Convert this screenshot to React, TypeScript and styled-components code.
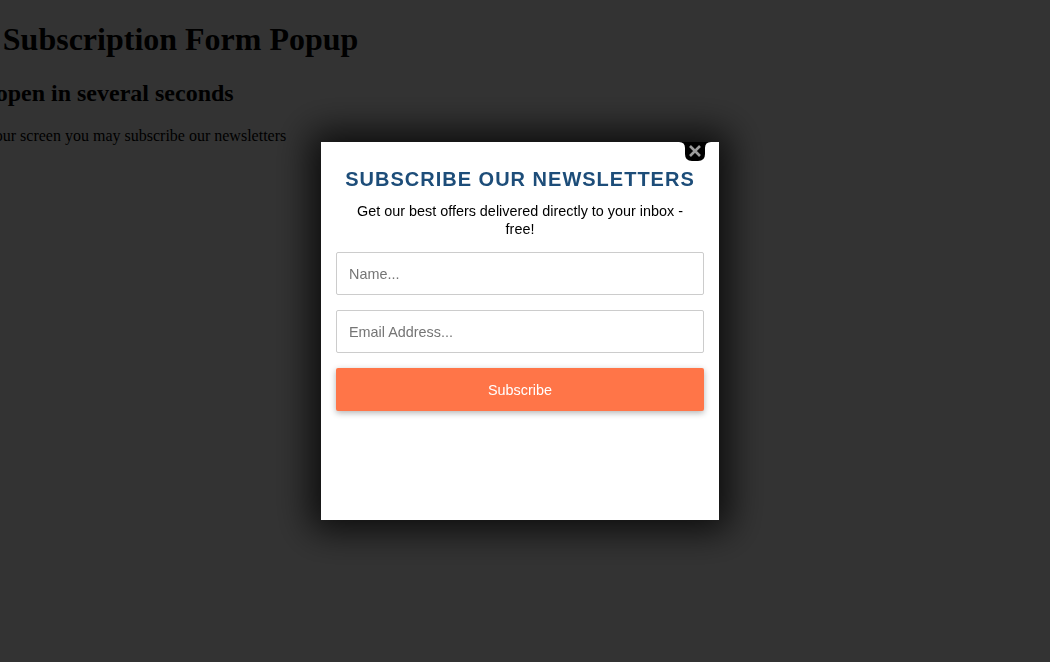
import styled, { createGlobalStyle } from "styled-components";

const GlobalStyle = createGlobalStyle`
  body {
    margin: 0;
    background: #ffffff;
    font-family: "Liberation Serif", "Times New Roman", serif;
    color: #000;
  }
`;

function CloseIcon() {
  return (
    <svg width="32" height="19" viewBox="0 0 32 19">
      <path d="M0 0 H32 Q26 0 26 6 V12 Q26 19 19 19 H13 Q6 19 6 12 V6 Q6 0 0 0 Z" fill="#000" />
      <path d="M11 4 L21 14 M21 4 L11 14" stroke="#9c9c9c" strokeWidth="2.6" strokeLinecap="butt" />
    </svg>
  );
}

function App() {
  return (
    <>
      <GlobalStyle />
      <Page>
        <h1>Email Subscription Form Popup</h1>
        <h2>We will open in several seconds</h2>
        <p>Opened on your screen you may subscribe our newsletters</p>
      </Page>

      <Overlay>
        <Popup>
          <CloseButton aria-label="Close">
            <CloseIcon />
          </CloseButton>
          <Title>Subscribe our newsletters</Title>
          <Lead>Get our best offers delivered directly to your inbox - free!</Lead>
          <Form onSubmit={(e) => e.preventDefault()}>
            <Field type="text" placeholder="Name..." />
            <Field type="email" placeholder="Email Address..." />
            <SubmitButton type="submit">Subscribe</SubmitButton>
          </Form>
        </Popup>
      </Overlay>
    </>
  );
}

const Page = styled.div`
  display: flow-root;
  margin-left: -87px;
  white-space: nowrap;
`;

const Overlay = styled.div`
  position: fixed;
  inset: 0;
  background: rgba(0, 0, 0, 0.8);

  display: flex;
  align-items: center;
  justify-content: center;
  padding-right: 10px;
`;

const Popup = styled.div`
  position: relative;
  width: 398px;
  height: 378px;
  box-sizing: border-box;
  padding: 26px 15px 15px;

  background: #fff;
  box-shadow: 0 0 35px 10px rgba(0, 0, 0, 0.8);

  font-family: "Liberation Sans", Arial, sans-serif;
  text-align: center;
`;

const CloseButton = styled.button`
  position: absolute;
  top: 0;
  right: 8px;
  padding: 0;
  border: none;
  background: none;
  line-height: 0;
  cursor: pointer;
`;

const Title = styled.h3`
  margin: 0;
  font-size: 20px;
  line-height: 23px;
  font-weight: bold;
  letter-spacing: 1px;
  text-transform: uppercase;
  color: #1d4d79;
`;

const Lead = styled.p`
  margin: 11px 0 0;
  padding: 0 14px;
  font-size: 14.4px;
  line-height: 18px;
  color: #000;
`;

const Form = styled.form`
  margin-top: 14px;
  display: flex;
  flex-direction: column;
  gap: 15px;
`;

const Field = styled.input`
  height: 43px;
  box-sizing: border-box;
  padding: 0 12px;
  border: 1px solid #cccccc;
  border-radius: 2px;
  font-family: "Liberation Sans", Arial, sans-serif;
  font-size: 14.4px;
  color: #333;
  outline: none;

  &::placeholder {
    color: #757575;
  }
`;

const SubmitButton = styled.button`
  height: 43px;
  border: none;
  border-radius: 2px;
  background: #ff7548;
  color: #fff;
  font-family: "Liberation Sans", Arial, sans-serif;
  font-size: 14.4px;
  box-shadow: 0 2px 6px rgba(0, 0, 0, 0.3);
  cursor: pointer;
`;

export default App;
